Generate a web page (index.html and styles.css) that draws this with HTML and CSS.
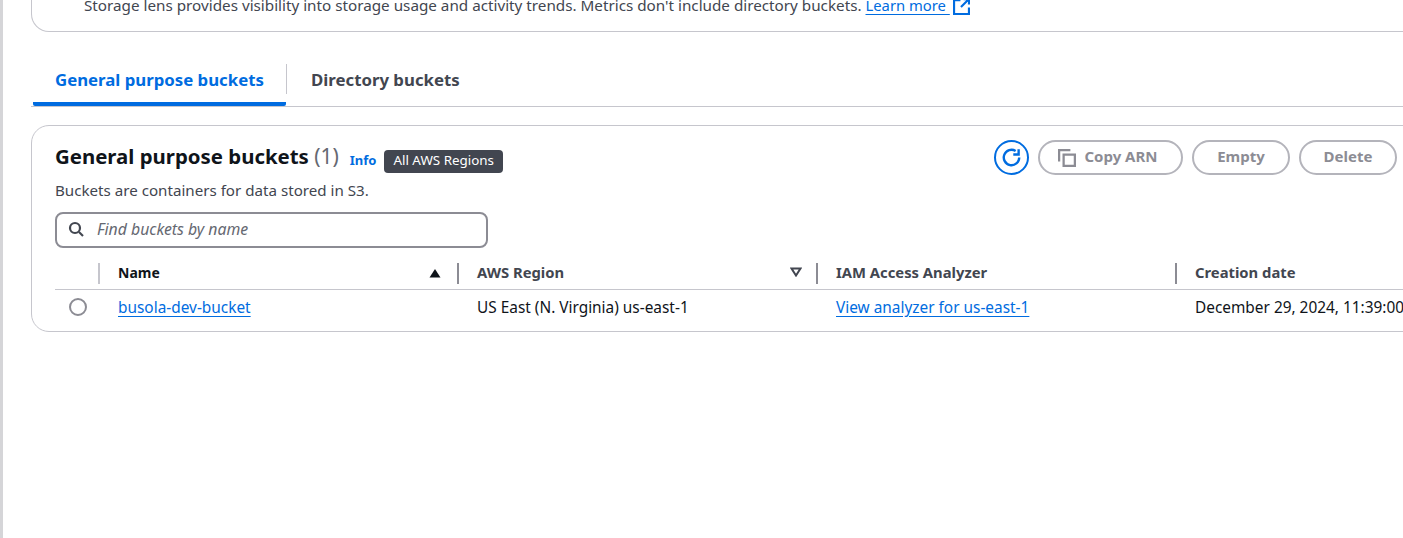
FILE: index.html
```html
<!DOCTYPE html>
<html lang="en">
<head>
  <meta charset="UTF-8" />
  <title>S3 Buckets</title>
  <link rel="stylesheet" href="styles.css">
</head>
<body>
  <div class="page">
    <div class="lens-card">
      <p>Storage lens provides visibility into storage usage and activity trends. Metrics don't include directory buckets. <a href="#" class="link">Learn more </a><svg class="ext-icon" viewBox="0 0 16 16" width="17" height="17" fill="none" stroke="#006ce0" stroke-width="2"><path d="M7 2H1v13h14V9"/><path d="M10 1h5v5M15 1 7.5 8.5"/></svg></p>
    </div>

    <div class="tabs">
      <div class="tab active">General purpose buckets</div>
      <div class="tab">Directory buckets</div>
    </div>

    <div class="buckets-card">
      <div class="card-header">
        <div class="title-block">
          <div class="title-row">
            <h2>General purpose buckets <span class="count">(1)</span></h2>
            <a href="#" class="info">Info</a>
            <span class="badge">All AWS Regions</span>
          </div>
          <p class="desc">Buckets are containers for data stored in S3.</p>
        </div>
        <div class="actions">
          <button class="icon-btn" aria-label="Refresh">
            <svg viewBox="0 0 16 16" width="19" height="19" fill="none" stroke="#006ce0" stroke-width="2"><path d="M14.5 8A6.5 6.5 0 1 1 11.5 2.5"/><path d="M14 1v4.5H9.5"/></svg>
          </button>
          <button class="btn copy">
            <svg viewBox="0 0 16 16" width="18" height="18" fill="none" stroke="#8c8c94" stroke-width="2"><path d="M1 11V1h10"/><path d="M5 5h10v10H5z"/></svg>
            <span>Copy ARN</span>
          </button>
          <button class="btn empty"><span>Empty</span></button>
          <button class="btn delete"><span>Delete</span></button>
        </div>
      </div>

      <div class="search">
        <svg viewBox="0 0 16 16" width="16" height="16" fill="none" stroke="#424650" stroke-width="2.2"><circle cx="7" cy="7" r="5"/><path d="m11 11 4 4"/></svg>
        <span>Find buckets by name</span>
      </div>

      <div class="table">
        <div class="row head">
          <div class="cell select"></div>
          <div class="cell first">Name
            <svg class="sort" viewBox="0 0 12 10" width="12" height="10"><path d="M6 1 11.5 9.5H.5z" fill="#0f141a"/></svg>
          </div>
          <div class="cell">AWS Region
            <svg class="sort region-sort" viewBox="0 0 12 10" width="12" height="10" fill="none" stroke="#424650" stroke-width="2"><path d="M1.5 1.5h9L6 8.5z"/></svg>
          </div>
          <div class="cell">IAM Access Analyzer</div>
          <div class="cell">Creation date</div>
        </div>
        <div class="row body">
          <div class="cell select"><span class="radio"></span></div>
          <div class="cell"><a href="#" class="link">busola-dev-bucket</a></div>
          <div class="cell">US East (N. Virginia) us-east-1</div>
          <div class="cell"><a href="#" class="link">View analyzer for us-east-1</a></div>
          <div class="cell">December 29, 2024, 11:39:00</div>
        </div>
      </div>
    </div>
  </div>
</body>
</html>
```

FILE: styles.css
```css
:root {
  --blue: #006ce0;
  --line: #c6c6cd;
  --text: #0f141a;
  --muted: #424650;
  --disabled: #8c8c94;
}

html, body {
  height: 100%;
}

body {
  margin: 0;
  overflow: hidden;
  background: #fff;
  color: var(--text);
  font-family: "Noto Sans", sans-serif;
  font-size: 15.4px;
  border-left: 3px solid #d5d5d8;
}

.page {
  width: 1500px;
  padding-left: 28px;
}

.link {
  color: var(--blue);
  text-decoration: underline;
  text-underline-offset: 3px;
}

.lens-card {
  display: flex;
  align-items: flex-end;
  height: 31px;
  border: 1px solid var(--line);
  border-top: none;
  border-radius: 0 0 18px 18px;
  padding-left: 52px;
  color: var(--muted);
  overflow: hidden;
}

.lens-card p {
  margin: 0 0 16px;
  font-size: 15.24px;
  line-height: 20px;
  display: flex;
  align-items: center;
  white-space: pre;
}

.lens-card .link {
  font-size: 14.8px;
}

.ext-icon {
  margin-left: 3px;
  margin-top: 3px;
}

.tabs {
  display: flex;
  margin-top: 32px;
  height: 42px;
  border-bottom: 1px solid var(--line);
}

.tab {
  font-size: 16.8px;
  font-weight: 700;
  color: var(--muted);
  padding: 0 25px;
  height: 32px;
  line-height: 32px;
}

.tab.active {
  color: var(--blue);
  margin-left: 2px;
  width: 253px;
  box-sizing: border-box;
  padding: 0 22px;
  height: 42px;
  border-bottom: 4px solid var(--blue);
  border-radius: 0 0 2px 2px;
  position: relative;
  white-space: nowrap;
}

.tab.active::after {
  content: "";
  position: absolute;
  right: -1px;
  top: 0;
  height: 30px;
  width: 1px;
  background: var(--line);
}

.buckets-card {
  margin-top: 18px;
  height: 207px;
  box-sizing: border-box;
  border: 1px solid var(--line);
  border-radius: 18px;
  padding: 14px 0 0 23px;
}

.card-header {
  display: flex;
  justify-content: space-between;
  width: 1342px;
}

.title-row {
  display: flex;
  align-items: center;
  height: 35px;
}

h2 {
  margin: -4px 0 0;
  font-size: 20.4px;
  font-weight: 700;
  white-space: pre;
}

.count {
  font-size: 21px;
  font-weight: 400;
  color: #656871;
}

.info {
  color: var(--blue);
  font-size: 13px;
  font-weight: 700;
  text-decoration: none;
  margin-left: 11px;
  margin-top: 5px;
}

.badge {
  background: var(--muted);
  color: #fff;
  font-size: 13.4px;
  padding: 0 9px;
  height: 23px;
  line-height: 21px;
  border-radius: 4px;
  margin-left: 8px;
  margin-top: 7px;
}

.desc {
  margin: 5px 0 0;
  font-size: 15.15px;
  line-height: 20px;
  color: var(--muted);
}

.actions {
  display: flex;
  gap: 9px;
}

.icon-btn {
  width: 35px;
  height: 35px;
  border: 2px solid var(--blue);
  border-radius: 50%;
  background: #fff;
  padding: 0;
  display: flex;
  align-items: center;
  justify-content: center;
}

.btn {
  height: 35px;
  box-sizing: border-box;
  border: 2px solid #b4b4bb;
  border-radius: 18px;
  background: #fff;
  color: var(--disabled);
  font-family: inherit;
  font-size: 15px;
  font-weight: 700;
  display: flex;
  align-items: center;
  justify-content: center;
  gap: 8px;
  padding: 0;
}

.btn span {
  margin-bottom: 3px;
}

.btn.copy {
  width: 145px;
  padding-right: 5px;
}
.btn.empty { width: 98px; }
.btn.delete { width: 98px; }

.search {
  display: flex;
  align-items: center;
  gap: 13px;
  box-sizing: border-box;
  width: 433px;
  height: 36px;
  margin-top: 12px;
  padding: 0 0 2px 11px;
  border: 2px solid #8c8c94;
  border-radius: 8px;
  color: #656871;
  font-size: 15.8px;
  font-style: italic;
}

.row {
  display: grid;
  grid-template-columns: 43px 359px 359px 359px 400px;
}

.head {
  height: 42px;
  border-bottom: 1px solid var(--line);
  box-sizing: border-box;
  font-size: 14.8px;
  font-weight: 700;
  color: var(--muted);
}

.head .cell {
  display: flex;
  align-items: center;
  justify-content: space-between;
  position: relative;
  padding: 6px 0 0 20px;
  box-sizing: border-box;
}

.head .cell.select {
  padding: 0;
}

.head .cell + .cell::before {
  content: "";
  position: absolute;
  left: 0;
  top: 15px;
  height: 21px;
  width: 2px;
  background: #8c8c94;
}

.head .first::before {
  background: var(--line) !important;
}

.head .cell.first {
  color: var(--text);
  font-size: 14px;
  padding-top: 8px;
}

.sort {
  margin-right: 16px;
}

.region-sort {
  margin-right: 14px;
}

.body {
  height: 34px;
  align-items: center;
}

.body .cell {
  padding-left: 20px;
  white-space: nowrap;
}

.body .cell.select {
  padding-left: 14px;
  display: flex;
}

.radio {
  width: 14px;
  height: 14px;
  border: 2px solid #8c8c94;
  border-radius: 50%;
}
```
